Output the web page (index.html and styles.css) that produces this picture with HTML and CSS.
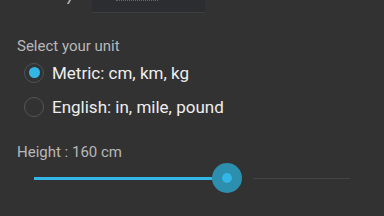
FILE: index.html
```html
<!DOCTYPE html>
<html lang="en">
<head>
    <meta charset="UTF-8">
    <title>Units</title>
    <link rel="stylesheet" href="styles.css">
</head>
<body>
    <div class="screen">
        <div class="topRow">
            <span class="tick"></span>
            <div class="field"><span class="dots"></span></div>
        </div>
        <p class="label unitLabel">Select your unit</p>
        <div class="radios">
            <label class="radio">
                <span class="circle checked"></span>
                <span>Metric: cm, km, kg</span>
            </label>
            <label class="radio">
                <span class="circle"></span>
                <span>English: in, mile, pound</span>
            </label>
        </div>
        <p class="label heightLabel">Height : 160 cm</p>
        <div class="slider">
            <div class="fill" style="width: 193px"></div>
            <div class="thumb"></div>
            <div class="rest"></div>
        </div>
    </div>
</body>
</html>
```
FILE: styles.css
```css
*{
    margin: 0;
    padding: 0;
    box-sizing: border-box;
}
body{
    background: #323232;
    color: #eee;
    font-family: Roboto, 'Liberation Sans', sans-serif;
    overflow: hidden;
}
.screen{
    width: 384px;
    height: 216px;
}
/* bits of the row scrolled off the top */
.topRow{
    display: flex;
    align-items: flex-start;
    height: 13px;
}
.tick{
    width: 2px;
    height: 4px;
    margin-left: 68px;
    margin-right: 22px;
    background: #aaa;
    transform: skewX(-30deg);
}
.field{
    width: 113px;
    height: 13px;
    background: #2b2d30;
    border-bottom: 1px solid #3d4043;
    padding-left: 24px;
}
.dots{
    display: block;
    width: 42px;
    height: 1px;
    border-top: 1px dotted #666;
}
.label{
    font-size: 15px;
    color: #b8b8b8;
    margin-left: 17px;
}
.unitLabel{
    margin-top: 24px;
    line-height: 18px;
}
.radios{
    margin-top: 1px;
}
.radio{
    display: flex;
    align-items: center;
    height: 33px;
    margin-left: 24px;
    font-size: 17px;
    color: #eee;
}
.radio + .radio{
    margin-top: 1px;
}
.circle{
    width: 20px;
    height: 20px;
    border-radius: 50%;
    border: 1.5px solid #555;
    margin-right: 8px;
    display: flex;
    align-items: center;
    justify-content: center;
}
.circle.checked{
    border-color: #4a5358;
}
.circle.checked::after{
    content: '';
    width: 11px;
    height: 11px;
    border-radius: 50%;
    background: #33b5e5;
}
.heightLabel{
    margin-top: 20px;
    line-height: 18px;
}
.slider{
    position: relative;
    display: flex;
    align-items: center;
    margin: 2px 0 0 34px;
    width: 316px;
    height: 30px;
}
.fill{
    height: 3px;
    background: #33b5e5;
}
.thumb{
    position: relative;
    width: 0;
    height: 0;
}
.thumb::before{
    content: '';
    position: absolute;
    left: -15px;
    top: -15px;
    width: 30px;
    height: 30px;
    border-radius: 50%;
    background: #2c8fae;
}
.thumb::after{
    content: '';
    position: absolute;
    left: -5px;
    top: -5px;
    width: 10px;
    height: 10px;
    border-radius: 50%;
    background: #33b5e5;
}
.rest{
    flex: 1;
    height: 1px;
    margin-left: 26px;
    background: #444;
}
```
